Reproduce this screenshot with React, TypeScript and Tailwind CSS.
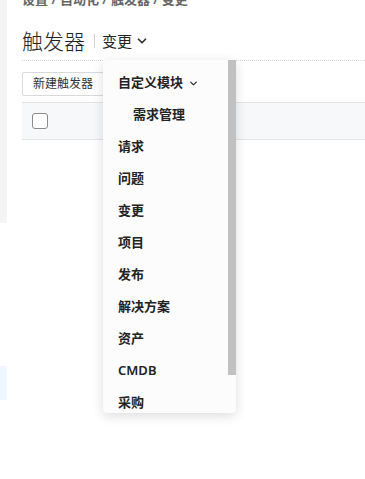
import { ChevronDown } from "lucide-react";

const items = [
  { label: "需求管理", indent: true },
  { label: "请求" },
  { label: "问题" },
  { label: "变更" },
  { label: "项目" },
  { label: "发布" },
  { label: "解决方案" },
  { label: "资产" },
  { label: "CMDB" },
  { label: "采购" },
];

function App() {
  return (
    <div
      className="relative w-[365px] h-[479px] overflow-hidden bg-white flex"
      style={{ fontFamily: '"Noto Sans", "Noto Sans CJK SC", sans-serif' }}
    >
      {/* left rail */}
      <div className="w-[7px] flex flex-col shrink-0">
        <div className="h-[223px] bg-[#f4f4f4]" />
        <div className="h-[143px]" />
        <div className="h-[34px] bg-[#eef6ff]" />
      </div>

      {/* main */}
      <div className="flex-1 pl-[15px] flex flex-col">
        <div className="mt-[-9px] text-[13px] font-semibold text-[#666] leading-[16px]">
          设置 / 自动化 / 触发器 / 变更
        </div>

        <div className="mt-[21px] flex items-center h-[26px]">
          <span className="text-[21px] font-light text-[#222] leading-none">触发器</span>
          <span className="ml-[9px] w-px h-[14px] bg-[#d0d0d0]" />
          <span className="ml-[7px] text-[15px] text-[#222] leading-none">变更</span>
          <ChevronDown className="ml-[3px] w-[14px] h-[14px] text-[#333]" strokeWidth={3} />
        </div>

        <div className="mt-[6px] border-t border-dotted border-[#d6d6d6]" />

        <div className="mt-[9px]">
          <button className="h-[24px] px-[10px] border border-[#d9d9d9] rounded-[2px] text-[12px] text-[#333] bg-white leading-none">
            新建触发器
          </button>
        </div>

        <div className="mt-[6px] h-[38px] bg-[#f7f8fa] border-y border-[#e3e4e6] flex items-center pl-[10px]">
          <span className="w-[16px] h-[16px] border border-[#8a8a8a] rounded-[3px] bg-white" />
        </div>
      </div>

      {/* dropdown menu */}
      <div className="absolute left-[103px] top-[60px] w-[133px] h-[353px] bg-[#fcfcfc] rounded-b-[4px] shadow-[0_3px_12px_rgba(0,0,0,0.14)] flex overflow-hidden">
        <div className="flex-1 pt-[7px] flex flex-col">
          <div className="h-[32px] shrink-0 pl-[15px] flex items-center text-[13px] font-semibold text-[#222]">
            自定义模块
            <ChevronDown className="ml-[5px] w-[11px] h-[11px] text-[#333]" strokeWidth={3} />
          </div>
          {items.map((it) => (
            <div
              key={it.label}
              className={`h-[32px] shrink-0 flex items-center text-[13px] font-semibold text-[#222] ${
                it.indent ? "pl-[30px]" : "pl-[15px]"
              }`}
            >
              {it.label}
            </div>
          ))}
        </div>
        <div className="w-[8px] shrink-0">
          <div className="h-[315px] bg-[#c1c1c1]" />
        </div>
      </div>
    </div>
  );
}

export default App;
